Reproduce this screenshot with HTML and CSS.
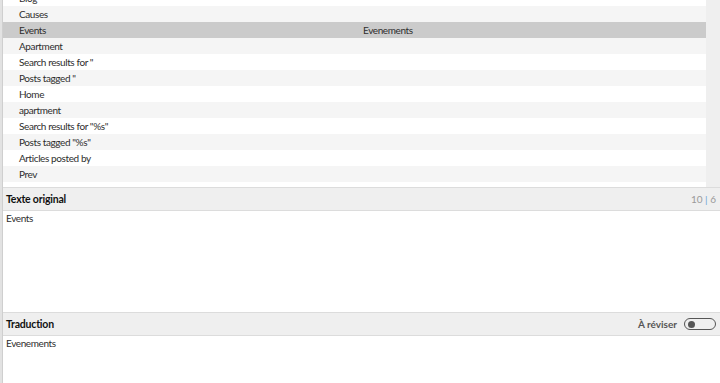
FILE: index.html
```html
<!DOCTYPE html>
<html lang="fr">
<head>
    <meta charset="UTF-8">
    <title>Traduction</title>
    <link rel="stylesheet" href="styles.css">
</head>
<body>
    <div class="app">
        <div class="gutter"></div>
        <div class="main">
            <div class="list-wrap">
                <div class="list">
                    <div class="row"><span class="src">Blog</span><span class="dst"></span></div>
                    <div class="row"><span class="src">Causes</span><span class="dst"></span></div>
                    <div class="row selected"><span class="src">Events</span><span class="dst">Evenements</span></div>
                    <div class="row"><span class="src">Apartment</span><span class="dst"></span></div>
                    <div class="row"><span class="src">Search results for "</span><span class="dst"></span></div>
                    <div class="row"><span class="src">Posts tagged "</span><span class="dst"></span></div>
                    <div class="row"><span class="src">Home</span><span class="dst"></span></div>
                    <div class="row"><span class="src">apartment</span><span class="dst"></span></div>
                    <div class="row"><span class="src">Search results for "%s"</span><span class="dst"></span></div>
                    <div class="row"><span class="src">Posts tagged "%s"</span><span class="dst"></span></div>
                    <div class="row"><span class="src">Articles posted by</span><span class="dst"></span></div>
                    <div class="row"><span class="src">Prev</span><span class="dst"></span></div>
                </div>
                <div class="scrollbar"></div>
            </div>

            <div class="pane-head">
                <span class="title">Texte original</span>
                <span class="count">10 <span class="sep">|</span> 6</span>
            </div>
            <div class="pane-body source">Events</div>

            <div class="pane-head">
                <span class="title">Traduction</span>
                <span class="review">À réviser <span class="toggle"><span class="knob"></span></span></span>
            </div>
            <div class="pane-body">Evenements</div>
        </div>
    </div>
</body>
</html>
```

FILE: styles.css
```css
html, body {
    margin: 0;
    height: 100%;
    overflow: hidden;
}
body {
    font-family: Lato, "Noto Sans", sans-serif;
    font-size: 10px;
    color: #2e2e2e;
    background-color: #ffffff;
}
.app {
    display: flex;
    height: 383px;
}
.gutter {
    width: 2px;
    background-color: #e2e2e2;
    border-right: 1px solid #cfcfcf;
}
.main {
    flex: 1;
    display: flex;
    flex-direction: column;
}
.list-wrap {
    display: flex;
    height: 187px;
    overflow: hidden;
}
.list {
    flex: 1;
    margin-top: -10px;
    letter-spacing: -0.4px;
}
.row {
    display: flex;
    height: 16px;
    line-height: 16px;
}
.row:nth-child(even) {
    background-color: #f5f5f5;
}
.row.selected {
    background-color: #cbcbcb;
}
.src {
    width: 344px;
    padding-left: 16px;
}
.dst {
    flex: 1;
}
.scrollbar {
    width: 14px;
    background-color: #efefef;
}
.pane-head {
    display: flex;
    justify-content: space-between;
    align-items: center;
    height: 22px;
    padding: 0 4px 0 3px;
    background-color: #efefef;
    border-top: 1px solid #dcdcdc;
    border-bottom: 1px solid #dcdcdc;
}
.title {
    font-weight: bold;
    font-size: 10.5px;
    color: #111;
    letter-spacing: -0.2px;
}
.count {
    color: #9a9a9a;
}
.sep {
    color: #6a9fd4;
}
.review {
    display: flex;
    align-items: center;
    gap: 7px;
    font-weight: bold;
    color: #555;
}
.toggle {
    width: 27px;
    height: 10px;
    border: 1.5px solid #555;
    border-radius: 8px;
    display: flex;
    align-items: center;
    padding-left: 3px;
}
.knob {
    width: 7px;
    height: 7px;
    border-radius: 50%;
    background-color: #555;
}
.pane-body {
    padding: 1px 3px;
    background-color: #ffffff;
    letter-spacing: -0.4px;
}
.pane-body.source {
    height: 99px;
}
```
